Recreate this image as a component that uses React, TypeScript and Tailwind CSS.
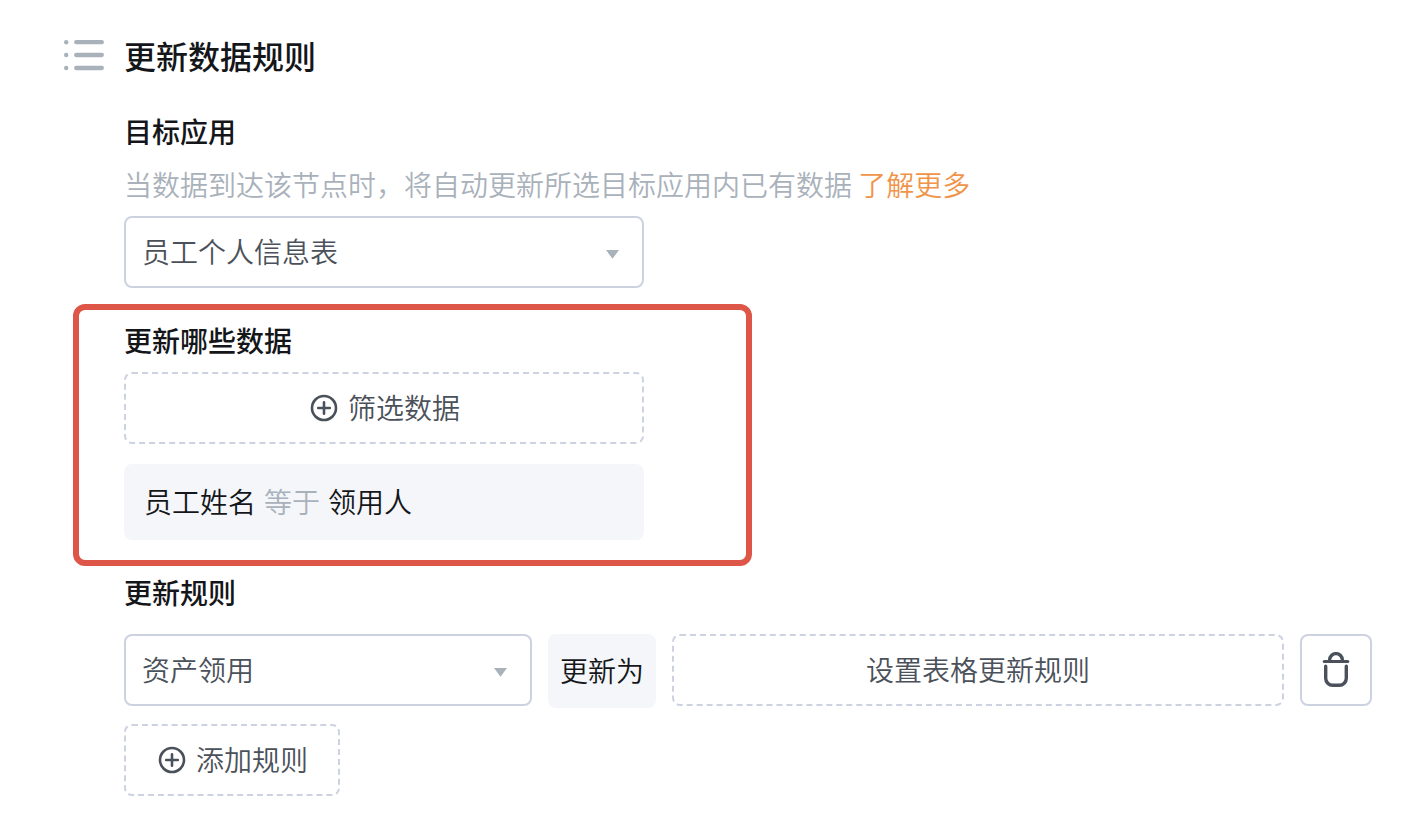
import React from "react";

type SelectFieldProps = {
    id: string;
    label: string;
    options: string[];
    className: string;
};

function ListIcon() {
    return (
        <svg width="40" height="40" viewBox="0 -1 40 40" className="shrink-0" aria-hidden="true">
            <g fill="#a9b1bb">
                <circle cx="2.2" cy="6.2" r="2.2" />
                <circle cx="2.2" cy="19" r="2.2" />
                <circle cx="2.2" cy="32" r="2.2" />
            </g>
            <path d="M12.2 6.2H37.8M12.2 19H37.8M12.2 32H37.8" stroke="#a9b1bb" strokeWidth="4.3" strokeLinecap="round" />
        </svg>
    );
}

function PlusIcon() {
    return (
        <svg width="28" height="28" viewBox="0 0 28 28" fill="none" stroke="currentColor" strokeWidth="2.6" aria-hidden="true">
            <circle cx="14" cy="14" r="12" />
            <path d="M14 8.2V19.8M8.2 14H19.8" strokeLinecap="round" />
        </svg>
    );
}

function TrashIcon() {
    return (
        <svg width="28" height="36" viewBox="0 0 28 36" fill="none" stroke="#4b515a" strokeLinecap="round" aria-hidden="true">
            <path d="M7.6 9V8a6.4 6.4 0 0 1 12.8 0V9" strokeWidth="3.4" strokeLinecap="butt" />
            <path d="M2.2 9.6H25.8" strokeWidth="3" />
            <path d="M3.7 14.2V26.3a7 7 0 0 0 7 7H17.3a7 7 0 0 0 7-7V14.2" strokeWidth="3.4" />
        </svg>
    );
}

function SelectField({ id, label, options, className }: SelectFieldProps) {
    return (
        <div className={`relative ${className}`}>
            <select
                id={id}
                aria-label={label}
                className="block h-[72px] w-full appearance-none rounded-lg border-2 border-[#cdd2e1] bg-white pb-[2px] pl-4 pr-14 text-[28px] font-[350] text-[#4b515a]"
            >
                {options.map((o) => (
                    <option key={o}>{o}</option>
                ))}
            </select>
            <svg
                width="14"
                height="9"
                viewBox="0 0 14 9"
                className="pointer-events-none absolute right-6 top-[34px]"
                aria-hidden="true"
            >
                <path d="M0 0H13L6.5 8.8Z" fill="#a9b1bb" />
            </svg>
        </div>
    );
}

export default function App() {
    return (
        <main
            lang="zh-CN"
            className="min-h-screen bg-white pb-4 pl-16 pr-[54px] pt-[35px] font-['Noto_Sans_CJK_SC',sans-serif] text-[28px] leading-10 font-[350] text-[#141619]"
        >
            <header className="flex gap-5">
                <ListIcon />
                <h1 className="text-[32px] leading-10 font-medium">更新数据规则</h1>
            </header>

            <div className="pl-[60px]">
                <section className="mt-9">
                    <h2 className="font-medium">目标应用</h2>
                    <p className="mt-[13px] text-[#a9b1bb]">
                        当数据到达该节点时，将自动更新所选目标应用内已有数据{" "}
                        <a href="#more" className="text-[#f0944a]">
                            了解更多
                        </a>
                    </p>
                    <SelectField id="target" label="目标应用" options={["员工个人信息表"]} className="mt-3 max-w-[520px]" />
                </section>

                <section className="-ml-[51px] mt-4 max-w-[679px] rounded-xl border-6 border-[#de5648] pb-5 pl-[45px] pt-[10px]">
                    <h2 className="font-medium">更新哪些数据</h2>
                    <div className="max-w-[520px]">
                        <button
                            type="button"
                            className="mt-3 flex h-[72px] w-full items-center justify-center gap-[10px] rounded-lg border-2 border-dashed border-[#cdd2e1] pl-[2px] text-[#4b515a]"
                        >
                            <PlusIcon />
                            <span className="pb-[2px]">筛选数据</span>
                        </button>
                        <div className="mt-5 flex h-[76px] items-center gap-2 rounded-lg bg-[#f4f6fa] px-5 pb-[2px]">
                            <span>员工姓名</span>
                            <span className="text-[#a9b1bb]">等于</span>
                            <span>领用人</span>
                        </div>
                    </div>
                </section>

                <section className="mt-[6px]">
                    <h2 className="font-medium">更新规则</h2>
                    <div className="mt-[22px] grid grid-cols-[2fr_auto_3fr_auto] items-start gap-4">
                        <SelectField id="field" label="更新字段" options={["资产领用"]} className="min-w-0" />
                        <div className="flex h-[74px] items-center rounded-lg bg-[#f4f6fa] px-3 pb-[2px]">更新为</div>
                        <button
                            type="button"
                            className="h-[72px] min-w-0 rounded-lg border-2 border-dashed border-[#cdd2e1] pb-[2px] text-[#4b515a]"
                        >
                            设置表格更新规则
                        </button>
                        <button
                            type="button"
                            aria-label="删除"
                            className="flex size-[72px] items-center justify-center rounded-lg border-2 border-[#cdd2e1]"
                        >
                            <TrashIcon />
                        </button>
                    </div>
                    <button
                        type="button"
                        className="mt-4 flex h-[72px] items-center gap-[10px] rounded-lg border-2 border-dashed border-[#cdd2e1] pl-8 pr-[30px] text-[#4b515a]"
                    >
                        <PlusIcon />
                        <span className="pb-[2px]">添加规则</span>
                    </button>
                </section>
            </div>
        </main>
    );
}
